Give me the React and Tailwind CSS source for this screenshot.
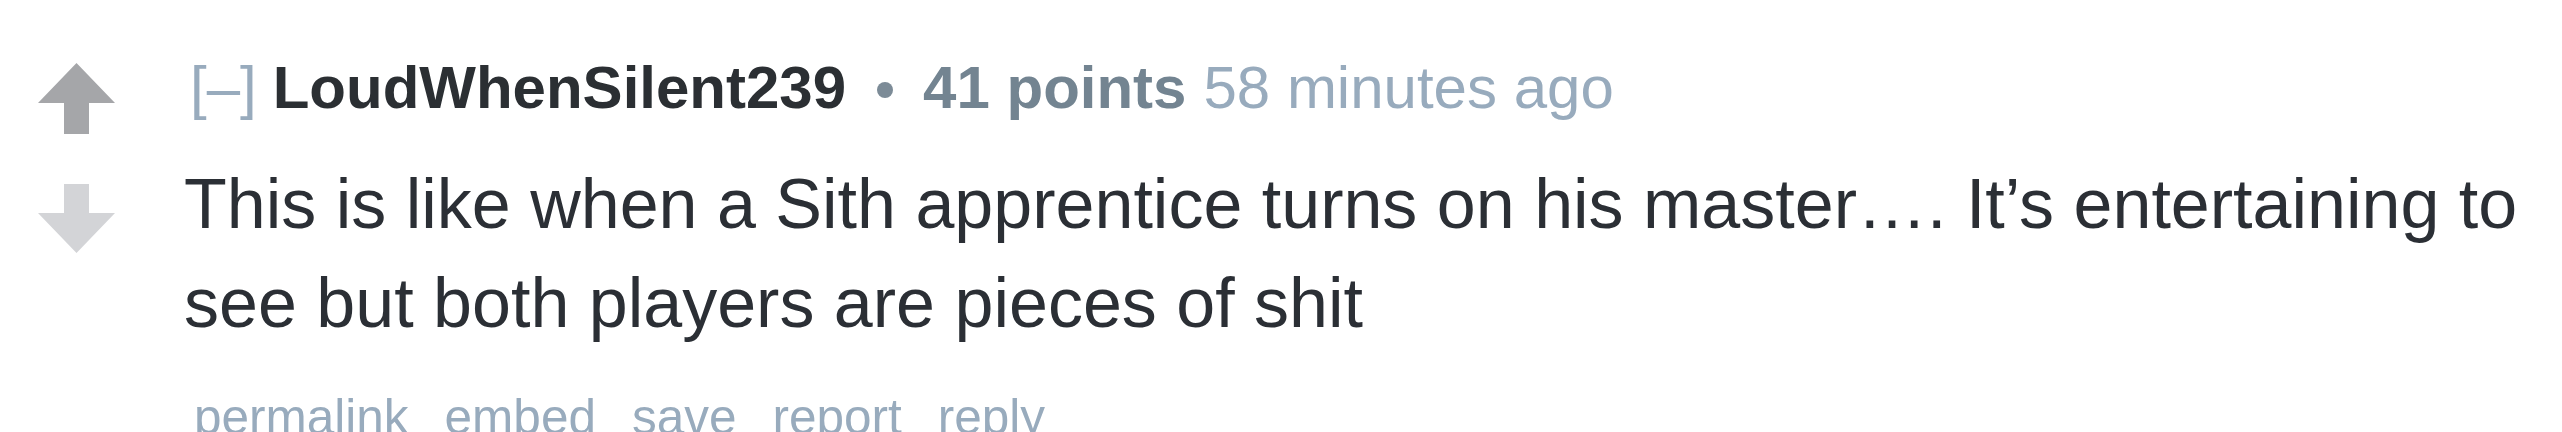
import React from "react";

function UpArrow() {
  return (
    <svg width="77" height="71" viewBox="0 0 77 71" className="block">
      <polygon points="38.5,0 77,40 51,40 51,71 26,71 26,40 0,40" fill="#a5a6a9" />
    </svg>
  );
}

function DownArrow() {
  return (
    <svg width="77" height="69" viewBox="0 0 77 69" className="block">
      <polygon points="26,0 51,0 51,29 77,29 38.5,69 0,29 26,29" fill="#d3d4d7" />
    </svg>
  );
}

export default function App() {
  const font = { fontFamily: '"Liberation Sans", Arial, sans-serif' };
  return (
    <div
      className="w-[2562px] h-[432px] overflow-hidden bg-white flex"
      style={font}
    >
      <div className="flex flex-col items-start pl-[38px] pt-[63px] w-[146px] shrink-0">
        <div className="w-[77px]">
          <UpArrow />
        </div>
        <div className="w-[77px] mt-[50px]">
          <DownArrow />
        </div>
      </div>
      <div className="flex flex-col pl-[38px] min-w-0 flex-1">
        <div className="mt-[58px] pl-[6px] text-[60px] leading-[60px] whitespace-nowrap flex items-center">
          <span className="text-[#98abbd]">[–]</span>
          <span className="font-bold text-[#2b2f33] ml-[16px]">LoudWhenSilent239</span>
          <span className="inline-block w-[16px] h-[16px] rounded-full bg-[#7c8b97] ml-[31px] mr-[30px] mt-[4px]"></span>
          <span className="font-bold text-[#738491]">41 points</span>
          <span className="text-[#98abbd] ml-[17px]">58 minutes ago</span>
        </div>
        <div className="mt-[37px] text-[70px] leading-[99px] text-[#2b2f35]">
          This is like when a Sith apprentice turns on his master…. It’s entertaining to see but both players are pieces of shit
        </div>
        <div className="mt-[39px] pl-[10px] flex gap-[36px] text-[49.5px] leading-[50px] text-[#98abbd] whitespace-nowrap">
          <span>permalink</span>
          <span>embed</span>
          <span>save</span>
          <span>report</span>
          <span>reply</span>
        </div>
      </div>
    </div>
  );
}
